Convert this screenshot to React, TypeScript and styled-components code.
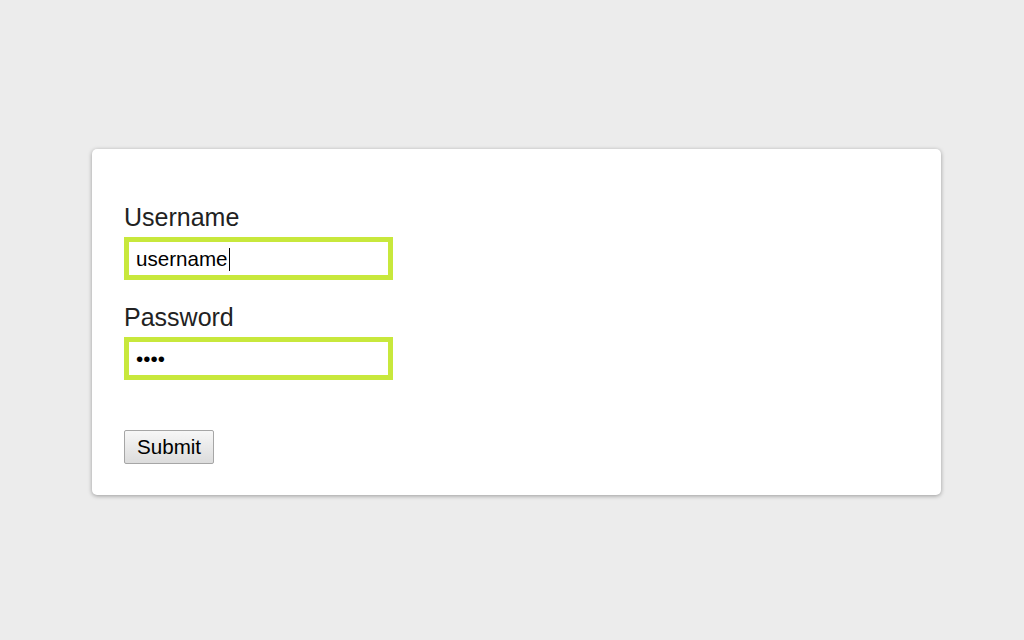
import React from "react";
import styled, { createGlobalStyle } from "styled-components";

const Global = createGlobalStyle`
  html, body { margin: 0; padding: 0; background: #ececec; }
  body { font-family: "Liberation Sans", Arial, sans-serif; }
`;

const Page = styled.div`
  min-height: 640px;
  box-sizing: border-box;
  padding: 149px 83px 0 92px;
`;

const Card = styled.form`
  background: #fff;
  border-radius: 5px;
  box-shadow: 0 1px 4px rgba(0, 0, 0, 0.35);
  padding: 54px 32px 31px;
  display: flex;
  flex-direction: column;
  align-items: flex-start;
`;

const Label = styled.label<{ $gap?: number }>`
  display: block;
  font-size: 25px;
  line-height: 28px;
  color: #222;
  margin-top: ${(p) => p.$gap ?? 0}px;
  margin-bottom: 6px;
`;

const Field = styled.div`
  position: relative;
`;

const Input = styled.input`
  display: block;
  box-sizing: border-box;
  width: 269px;
  height: 43px;
  border: 5px solid #c8e83c;
  padding: 0 7px;
  font-family: "Liberation Sans", Arial, sans-serif;
  font-size: 20.6px;
  color: #000;
  background: #fff;
  outline: none;
  border-radius: 0;
  margin: 0;
  caret-color: transparent;
`;

const Caret = styled.span`
  position: absolute;
  left: 105px;
  top: 11px;
  width: 1px;
  height: 23px;
  background: #000;
`;

const Button = styled.button`
  margin-top: 50px;
  height: 34px;
  padding: 0 12px;
  font-family: "Liberation Sans", Arial, sans-serif;
  font-size: 20.6px;
  color: #000;
  background: linear-gradient(#f7f7f7, #dcdcdc);
  border: 1px solid #a6a6a6;
  border-radius: 2px;
`;

export default function App() {
  return (
    <>
      <Global />
      <Page>
        <Card onSubmit={(e) => e.preventDefault()}>
          <Label htmlFor="u">Username</Label>
          <Field>
            <Input id="u" type="text" defaultValue="username" />
            <Caret />
          </Field>
          <Label htmlFor="p" $gap={23}>Password</Label>
          <Field>
            <Input id="p" type="password" defaultValue="1234" />
          </Field>
          <Button type="submit">Submit</Button>
        </Card>
      </Page>
    </>
  );
}
